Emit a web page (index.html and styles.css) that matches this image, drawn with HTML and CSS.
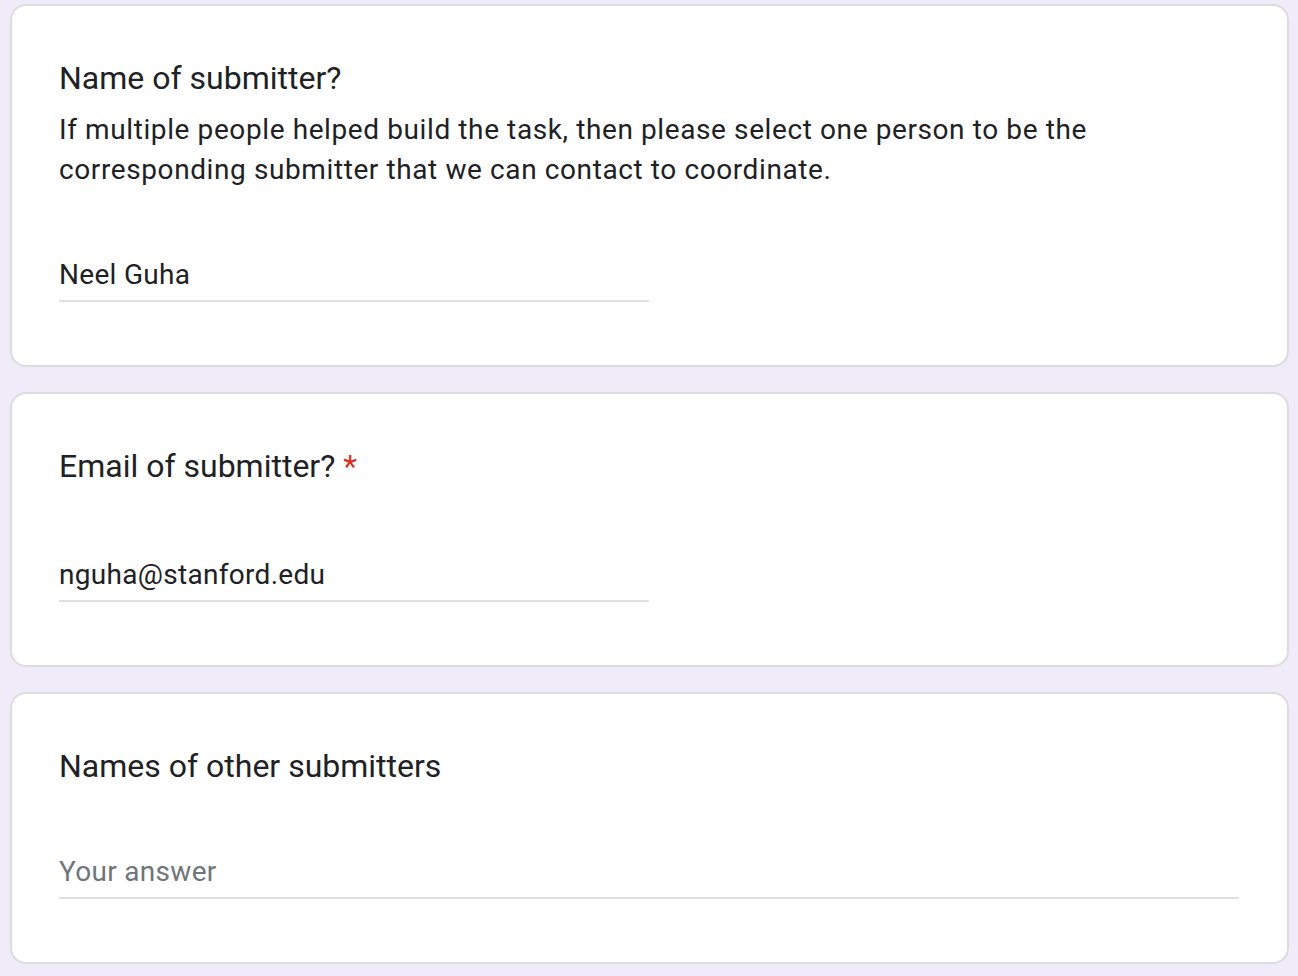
FILE: index.html
```html
<!DOCTYPE html>
<html lang="en">
<head>
<meta charset="utf-8">
<title>Form</title>
<link rel="stylesheet" href="styles.css">
</head>
<body>
<main class="form">
  <section class="card">
    <div class="title">Name of submitter?</div>
    <div class="desc">If multiple people helped build the task, then please select one person to be the corresponding submitter that we can contact to coordinate.</div>
    <div class="answer short">Neel Guha</div>
  </section>
  <section class="card">
    <div class="title">Email of submitter?<span class="req">*</span></div>
    <div class="answer short">nguha@stanford.edu</div>
  </section>
  <section class="card card-last">
    <div class="title">Names of other submitters</div>
    <div class="answer placeholder">Your answer</div>
  </section>
</main>
</body>
</html>
```
FILE: styles.css
```css
html, body {
  margin: 0;
  padding: 0;
  background: #f0ebf8;
}
body {
  font-family: Roboto, "Noto Sans", Arial, sans-serif;
  color: #202124;
}
.form {
  display: flex;
  flex-direction: column;
  gap: 25px;
  padding: 4px 9px 0 10px;
}
.card {
  background: #fff;
  border: 2px solid #dadce0;
  border-radius: 16px;
  padding: 48px 48px 63px 47px;
}
.title {
  font-size: 32px;
  line-height: 48px;
  letter-spacing: 0;
}
.req {
  color: #d93025;
  padding-left: 8px;
}
.desc {
  margin-top: 8px;
  font-size: 28px;
  line-height: 40px;
  letter-spacing: 0.6px;
  max-width: 1100px;
}
.answer {
  margin-top: 64px;
  font-size: 28px;
  line-height: 40px;
  letter-spacing: 0.3px;
  padding-top: 1px;
  padding-bottom: 5px;
  border-bottom: 2px solid #e0e0e0;
}
.answer.short {
  width: 50%;
}
.card-last {
  padding-bottom: 63px;
}
.card-last .answer {
  margin-top: 62px;
  padding-top: 0;
  padding-bottom: 5px;
}
.placeholder {
  color: #70757a;
}
```
